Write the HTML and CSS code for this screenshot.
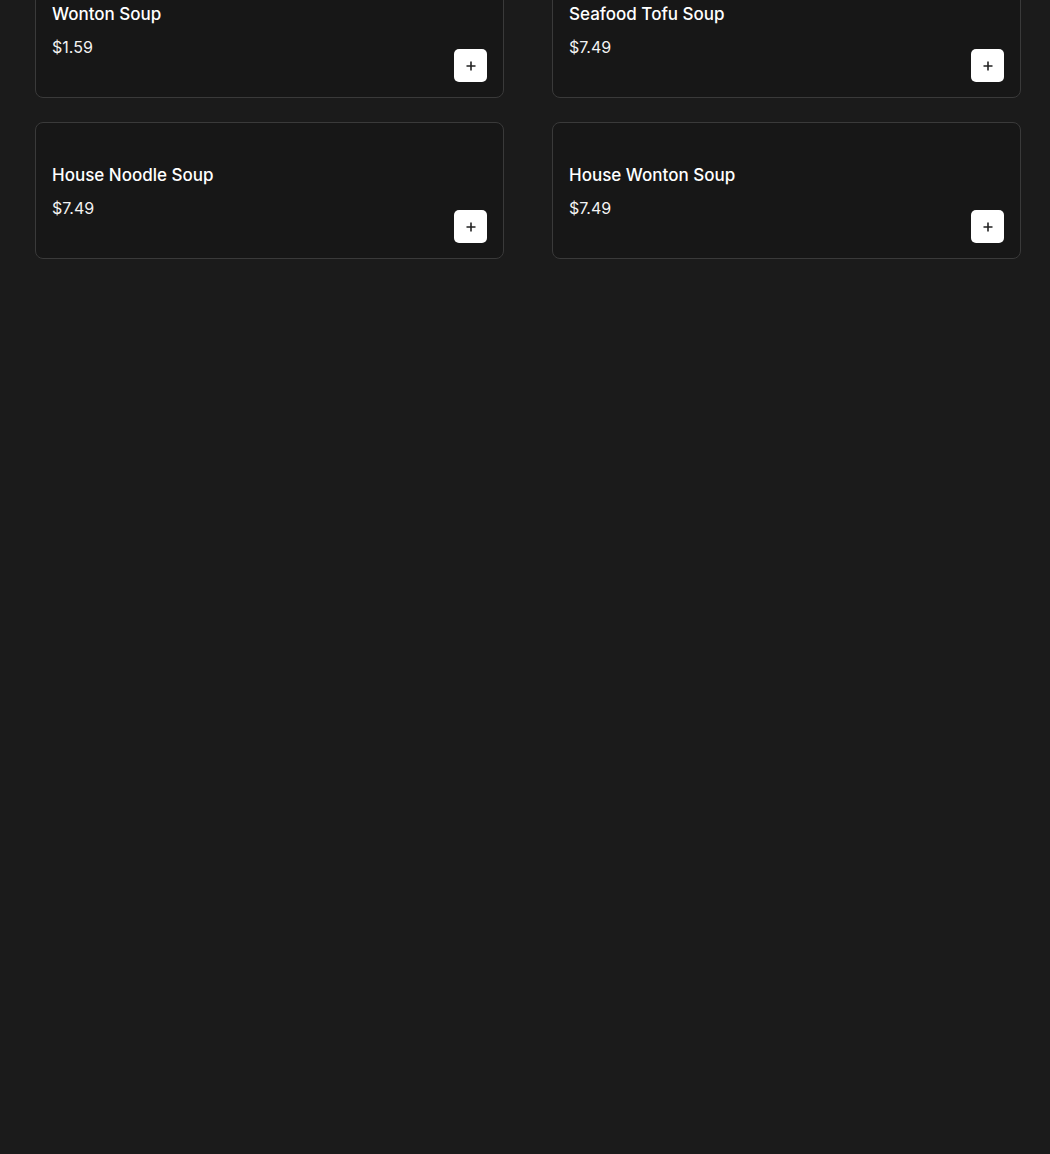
FILE: index.html
```html
<!DOCTYPE html>
<html lang="en">
  <head>
    <meta charset="UTF-8" />
    <meta name="viewport" content="width=device-width, initial-scale=1.0" />
    <title>Soups</title>
    <link rel="stylesheet" href="styles.css">
  </head>
  <body>
    <div class="menu-grid">
      <div class="item-card">
        <div class="item-info">
          <h3 class="item-name">Wonton Soup</h3>
          <p class="item-price">$1.59</p>
        </div>
        <button class="add-btn" type="button" aria-label="Add">
          <svg width="12" height="12" viewBox="0 0 12 12"><path d="M6 1.5v9M1.5 6h9" stroke="#222" stroke-width="1.6" fill="none"/></svg>
        </button>
      </div>
      <div class="item-card">
        <div class="item-info">
          <h3 class="item-name">Seafood Tofu Soup</h3>
          <p class="item-price">$7.49</p>
        </div>
        <button class="add-btn" type="button" aria-label="Add">
          <svg width="12" height="12" viewBox="0 0 12 12"><path d="M6 1.5v9M1.5 6h9" stroke="#222" stroke-width="1.6" fill="none"/></svg>
        </button>
      </div>
      <div class="item-card">
        <div class="item-info">
          <h3 class="item-name">House Noodle Soup</h3>
          <p class="item-price">$7.49</p>
        </div>
        <button class="add-btn" type="button" aria-label="Add">
          <svg width="12" height="12" viewBox="0 0 12 12"><path d="M6 1.5v9M1.5 6h9" stroke="#222" stroke-width="1.6" fill="none"/></svg>
        </button>
      </div>
      <div class="item-card">
        <div class="item-info">
          <h3 class="item-name">House Wonton Soup</h3>
          <p class="item-price">$7.49</p>
        </div>
        <button class="add-btn" type="button" aria-label="Add">
          <svg width="12" height="12" viewBox="0 0 12 12"><path d="M6 1.5v9M1.5 6h9" stroke="#222" stroke-width="1.6" fill="none"/></svg>
        </button>
      </div>
    </div>
  </body>
</html>
```

FILE: styles.css
```css
body {
  font-family: "Inter", "Open Sans", sans-serif;
  margin: 0;
  padding: 0 29px 0 35px;
  background-color: #1b1b1b;
  color: #fff;
}

.menu-grid {
  display: grid;
  grid-template-columns: 1fr 1fr;
  column-gap: 48px;
  row-gap: 24px;
  margin-top: -39px;
}

.item-card {
  display: flex;
  align-items: flex-end;
  justify-content: space-between;
  padding: 16px 16px 15px;
  border: 1px solid #3a3a3a;
  border-radius: 8px;
  background-color: #171717;
}

.item-info {
  padding: 25px 0 24px;
}

.item-name {
  margin: 0 0 11px;
  font-size: 17px;
  line-height: 22px;
  font-weight: 500;
}

.item-price {
  margin: 0;
  font-size: 16px;
  line-height: 22px;
  color: #f2f2f2;
}

.add-btn {
  width: 33px;
  height: 33px;
  padding: 0;
  border: none;
  border-radius: 5px;
  background-color: #fff;
  display: flex;
  align-items: center;
  justify-content: center;
  cursor: pointer;
}
```
